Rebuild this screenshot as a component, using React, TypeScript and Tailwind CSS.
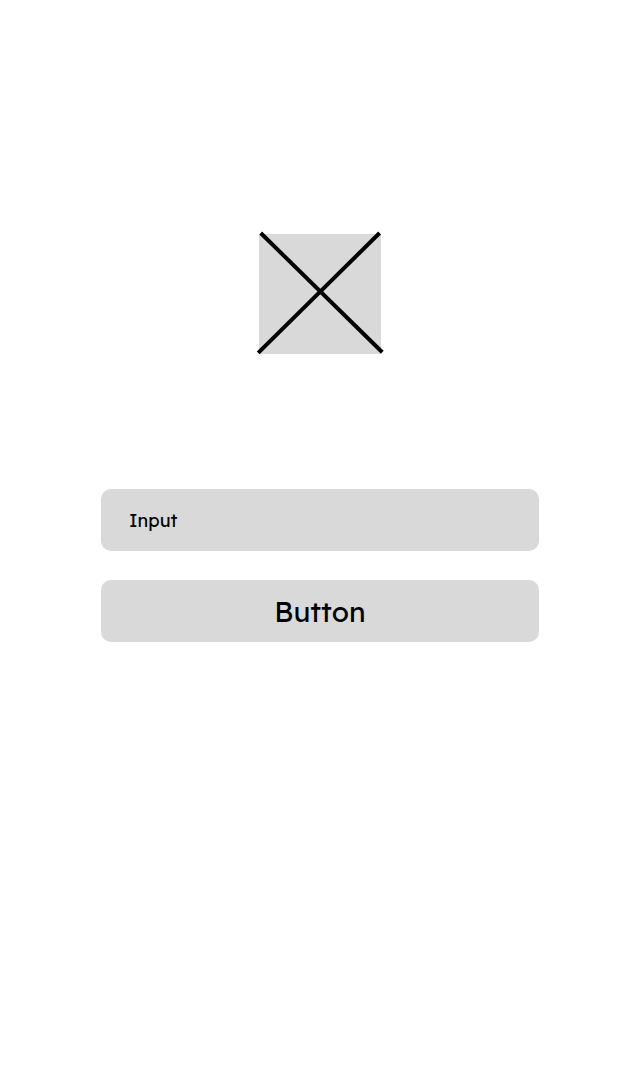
export default function App() {
  return (
    <main className="flex min-h-screen flex-col items-center bg-white px-[101px] pt-[231px] font-['Lexend','Open_Sans',sans-serif] text-black">
      <svg className="h-[124px] w-[126px] overflow-visible" viewBox="0 0 126 124" role="img" aria-label="Image">
        <rect x="2" y="3" width="122" height="120" fill="#d9d9d9" />
        <path d="M3.7 2 125.3 121.3M122.6 2 1.2 121.8" stroke="#000" strokeWidth="4" />
      </svg>
      <form className="mt-[134px] flex w-full flex-col gap-[29px]" onSubmit={(e) => e.preventDefault()}>
        <input
          type="text"
          aria-label="Input"
          placeholder="Input"
          className="h-[62px] w-full rounded-[10px] bg-[#d9d9d9] px-7 text-lg outline-none placeholder:text-black placeholder:opacity-100"
        />
        <button type="submit" className="h-[62px] w-full rounded-[10px] bg-[#d9d9d9] pt-0.5 text-[28px]">
          Button
        </button>
      </form>
    </main>
  );
}
